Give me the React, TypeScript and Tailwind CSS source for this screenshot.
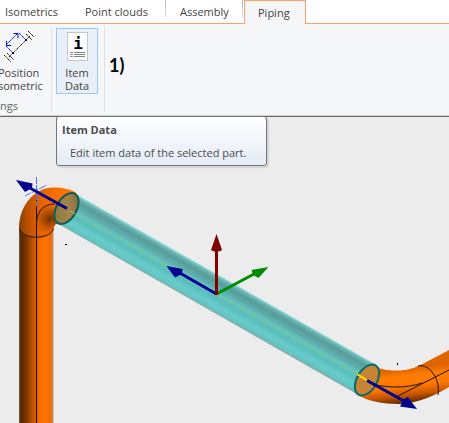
import { useState } from 'react'

type Tab = {
  label: string
  size: string
  divider?: boolean
}

const tabs: Tab[] = [
  { label: 'Isometrics', size: 'w-[72px] pl-[5px]' },
  { label: 'Point clouds', size: 'w-[95px] pl-[13px]', divider: true },
  { label: 'Assembly', size: 'w-[77px] pl-[13px]', divider: true },
  { label: 'Piping', size: 'w-[62px] pl-[13px]' },
]

function PositionIcon() {
  return (
    <svg width="38" height="34" viewBox="-2 30 38 34" fill="none" aria-hidden="true">
      <path
        d="M9 57 30 36M4 55l7 7M7 53l7 7M26 34l6 6M28 31l6 6"
        stroke="#111"
        strokeDasharray="1.400 .500"
      />
      <path d="M12 52h2v2h-2zM25 39h2v2h-2z" fill="#000" />
      <path
        d="M6 45 18 33M6 46l7 7M19 33l7 7"
        stroke="#0000ff"
        strokeDasharray="1.600 .400"
      />
      <path d="M6.500 41v4.500H11M13.500 33.500H18V38" stroke="#0000ff" />
    </svg>
  )
}

function ItemDataIcon() {
  return (
    <svg width="21" height="29" viewBox="0 0 21 29" shapeRendering="crispEdges" fill="none" aria-hidden="true">
      <path d="M.5.5h20v28H.5z" fill="#fff" stroke="#c6c6c6" />
      <text x="11" y="17" textAnchor="middle" className="fill-black font-['DejaVu_Sans_Mono',monospace] text-base font-bold">
        i
      </text>
      <path
        d="M3 20.500h3M7 20.500h11M3 22.500h3M7 22.500h11M3 24.500h3M7 24.500h11"
        stroke="#858585"
      />
    </svg>
  )
}

function PipeScene() {
  return (
    <svg
      className="block min-h-[306px] w-full flex-1"
      viewBox="0 117 449 306"
      preserveAspectRatio="xMinYMin slice"
      fill="none"
      role="img"
      aria-label="Pipe with selected part"
    >
      <defs>
        <linearGradient id="riser" x1="19" x2="53" y1="0" y2="0" gradientUnits="userSpaceOnUse">
          <stop offset="0" stopColor="#6e5a48" />
          <stop offset=".06" stopColor="#552600" />
          <stop offset=".25" stopColor="#8a3b00" />
          <stop offset=".45" stopColor="#cf5900" />
          <stop offset=".6" stopColor="#f46b00" />
          <stop offset=".8" stopColor="#ff7200" />
          <stop offset=".94" stopColor="#f06900" />
          <stop offset="1" stopColor="#c09070" />
        </linearGradient>
        <linearGradient id="elbow" x1="20" x2="66" y1="206" y2="206" gradientUnits="userSpaceOnUse">
          <stop offset="0" stopColor="#8a4108" />
          <stop offset=".12" stopColor="#b04c00" />
          <stop offset=".4" stopColor="#e06100" />
          <stop offset=".7" stopColor="#f46c00" />
          <stop offset="1" stopColor="#ff7200" />
        </linearGradient>
        <radialGradient id="elbowShade" cx="50" cy="219" r="15" gradientUnits="userSpaceOnUse">
          <stop offset="0" stopColor="#5a2600" stopOpacity=".85" />
          <stop offset=".5" stopColor="#7a3400" stopOpacity=".5" />
          <stop offset="1" stopColor="#a04500" stopOpacity="0" />
        </radialGradient>
        <linearGradient id="bend" x1="398" x2="402" y1="370" y2="404" gradientUnits="userSpaceOnUse">
          <stop offset="0" stopColor="#e06400" />
          <stop offset=".2" stopColor="#ff7d00" />
          <stop offset=".5" stopColor="#ff7800" />
          <stop offset=".75" stopColor="#c85600" />
          <stop offset="1" stopColor="#5a2600" />
        </linearGradient>
        <linearGradient id="tube" x1="225" x2="208" y1="279" y2="309" gradientUnits="userSpaceOnUse">
          <stop offset="0" stopColor="#8fdcda" />
          <stop offset=".07" stopColor="#68b2b0" />
          <stop offset=".18" stopColor="#579c9b" />
          <stop offset=".36" stopColor="#60b0af" />
          <stop offset=".46" stopColor="#62c5c3" />
          <stop offset=".62" stopColor="#5abdbc" />
          <stop offset=".8" stopColor="#67cccb" />
          <stop offset=".95" stopColor="#63c3c1" />
          <stop offset="1" stopColor="#8aa8a6" />
        </linearGradient>
        <linearGradient id="mouth" x1="55" x2="78" y1="218" y2="200" gradientUnits="userSpaceOnUse">
          <stop offset="0" stopColor="#8b7a43" />
          <stop offset=".6" stopColor="#a58349" />
          <stop offset="1" stopColor="#806d42" />
        </linearGradient>
      </defs>

      {/* riser and upper elbow */}
      <path d="M19 228h34.500V424H19z" fill="url(#riser)" />
      <path
        d="M19 229C19 205 35 187 54 187.500c9 0 17 2 22 5L57 224c-2 0-3 2-3.500 5-6 11-30 11-34.500 0z"
        fill="url(#elbow)"
      />
      <path d="M36 205h24l-3 19c-2 0-3 2-3.500 5-3 5-10 7-17.500 8z" fill="url(#elbowShade)" />
      <path d="M19.500 229c4 11 30 11 34 0M36.500 192v232M36.500 222c1-12 8-18 18-18" stroke="#1d1208" />

      {/* lower bend */}
      <path
        d="M375 366c8 5 20 5 30 4 9-1 16-5 44-20v37c-15 9-30 16-50 17-16 0-32-3-41-9z"
        fill="url(#bend)"
      />
      <path
        d="M368 382c12 6 38 7 54 1M398 396l51-26M418 366c12-3 23 15 20 29"
        stroke="#1d1208"
      />

      {/* selected part */}
      <path d="M75 193.500 376 364.500 358.500 395 57.500 223.500z" fill="url(#tube)" />
      <ellipse
        cx="66.500" cy="208.500" rx="10" ry="17"
        transform="rotate(30 66.500 208.500)"
        fill="url(#mouth)" stroke="#0d5c56" strokeWidth="2"
      />
      <ellipse
        cx="367" cy="380" rx="10" ry="17"
        transform="rotate(30 367 380)"
        fill="#c98336" stroke="#0d6a66" strokeWidth="2"
      />
      <path d="M70 211 357 374" stroke="#8fc95b" strokeDasharray="6 2 2 3" />
      <path d="M357 374 368 381" stroke="#f5ea00" strokeWidth="2" />

      {/* insertion point */}
      <path d="M36.500 177v29M25 196l22-11M27 186l19 11" stroke="#4d74ff" strokeDasharray="7 1" />

      {/* end arrows */}
      <path d="M29 187.500 67 208.500M367 380.500 404 401" stroke="#00008f" strokeWidth="3" />
      <path d="M16 180 32.500 183.500 32 188 25 192zM417 409 407.500 397 403 400 400 406.500z" fill="#00008f" />

      {/* axes */}
      <path d="M216.500 294 179 272.500" stroke="#00008f" strokeWidth="3" />
      <path d="M166.500 266 182.500 269 182 274 175 277.500z" fill="#00008f" />
      <path d="M216.500 294 254 274" stroke="#008c00" strokeWidth="3" />
      <path d="M268.500 267 251.500 270 253 275 258.500 278z" fill="#008c00" />
      <path d="M216.500 295V249" stroke="#800000" strokeWidth="3" />
      <path d="M216.500 234 211 250c3 2 8 2 11 0z" fill="#800000" />

      <path d="M65 244h2v1h-2zM397 363h1v2h-1z" fill="#000" />
    </svg>
  )
}

export default function App() {
  const [active, setActive] = useState('Piping')

  return (
    <main className="flex min-h-screen flex-col overflow-hidden bg-[#ececec] font-['Open_Sans','Noto_Sans',sans-serif] text-[11px] text-[#444]">
      <nav className="flex h-6 bg-white">
        {tabs.map((tab) => (
          <div
            key={tab.label}
            className={`flex shrink-0 justify-between border-[#ffa06f] ${tab.size} ${
              tab.label === active ? 'border border-b-0 bg-[#f5f6f8]' : 'border-b'
            }`}
          >
            <button
              onClick={() => setActive(tab.label)}
              className="pt-px whitespace-nowrap"
            >
              {tab.label}
            </button>
            {tab.divider && (
              <span className="mr-px h-[18px] w-px bg-linear-to-b from-[#b5b5b5] to-[#e8e8e8]" />
            )}
          </div>
        ))}
        <div className="flex-1 border-b border-[#ffa06f]" />
      </nav>

      <header className="flex h-[93px] border-b border-[#666] bg-[#f5f6f8] pt-[2px] leading-[13px] shadow-[inset_0_-1px_0_#d0d0d0]">
        <section className="mb-1 flex w-[52px] flex-col items-start border-r border-[#e0e1e3]">
          <button className="-ml-[2px] flex h-[68px] flex-col items-start pt-1">
            <PositionIcon />
            <span className="mt-[2px]">Position</span>
            <span>sometric</span>
          </button>
          <span className="pt-[5px] text-[#666]">ngs</span>
        </section>
        <section className="mb-1 w-[53px] border-r border-[#e0e1e3] px-1 pt-[2px]">
          <div className="relative">
            <button
              aria-describedby="item-data-tip"
              className="flex h-[66px] w-[42px] flex-col items-center border border-[#99c9f7] bg-[#e8eff7] pt-[3px]"
            >
              <ItemDataIcon />
              <span className="mt-[5px]">Item</span>
              <span>Data</span>
            </button>
            <div
              id="item-data-tip"
              role="tooltip"
              className="absolute top-[88px] left-0 h-[50px] w-[211px] rounded-[3px] border border-[#767676] bg-linear-to-b from-white to-[#e4ebf6] px-[5px] pt-[6px] whitespace-nowrap text-[#4c4c4c] shadow-[2px_2px_1px_#d5d5d5]"
            >
              <h2 className="font-bold">Item Data</h2>
              <p className="mt-[10px] pl-2">Edit item data of the selected part.</p>
            </div>
          </div>
        </section>
        <strong className="pt-[27px] pl-1 font-['Lato',sans-serif] text-lg leading-6 text-black">1)</strong>
      </header>

      <PipeScene />
    </main>
  )
}
